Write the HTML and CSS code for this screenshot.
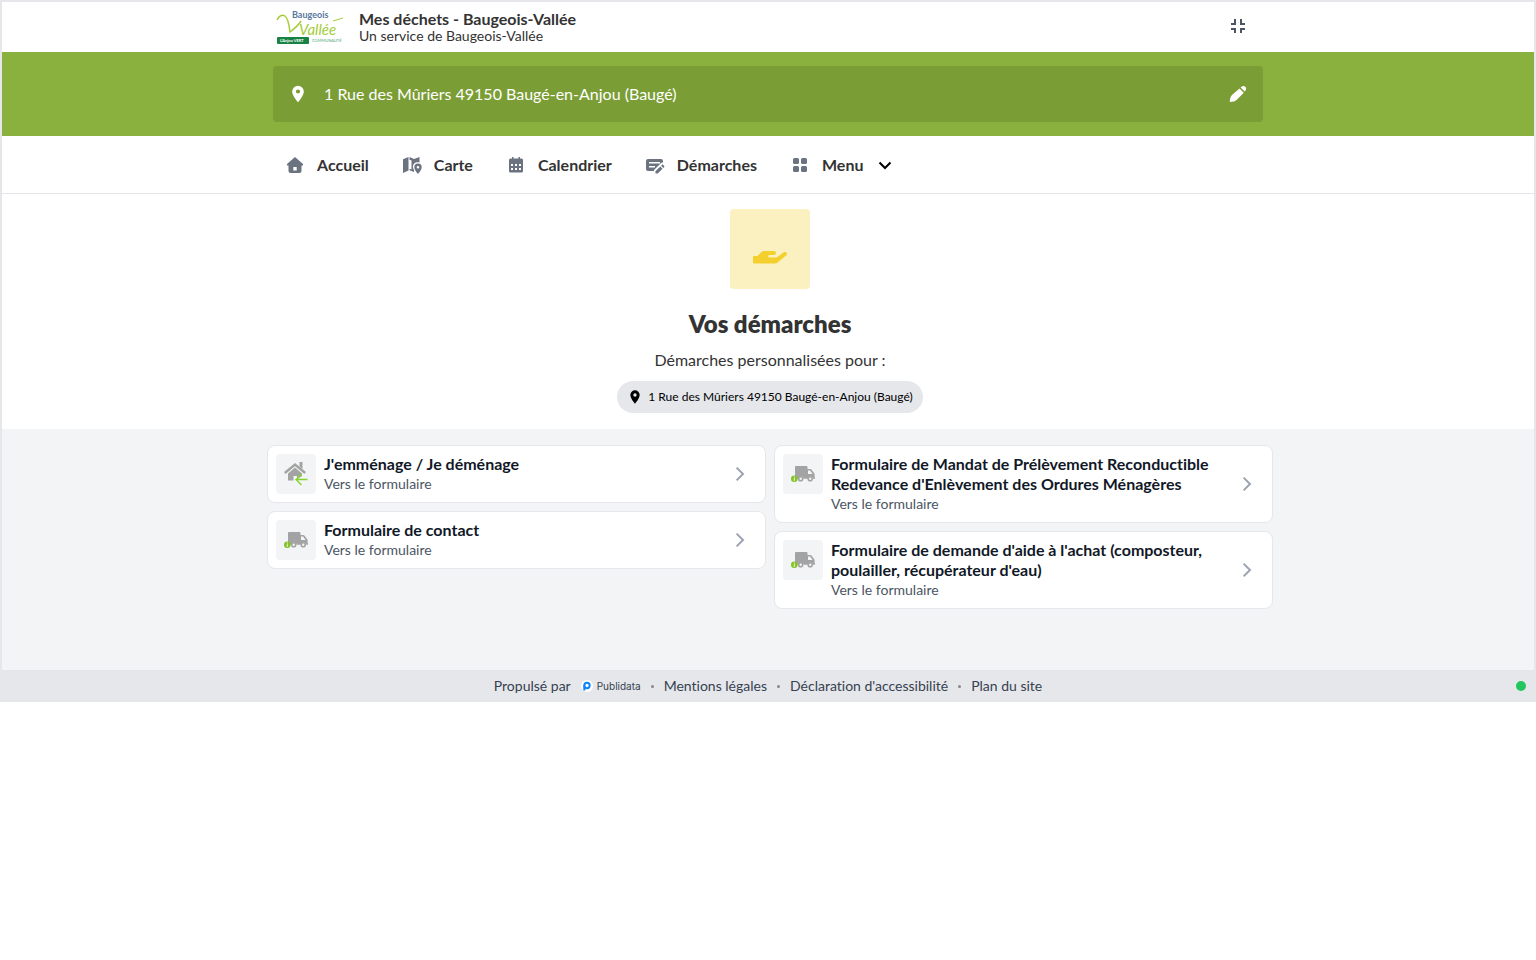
FILE: index.html
```
<!DOCTYPE html>
<html lang="fr">
  <head>
    <meta charset="UTF-8" />
    <meta name="viewport" content="width=device-width, initial-scale=1.0" />
    <title>Mes déchets - Baugeois-Vallée</title>
    <link rel="stylesheet" href="styles.css" />
  </head>
  <body>
    <!-- shared icons -->
    <svg class="sprite" aria-hidden="true">
      <symbol id="pin" viewBox="0 0 24 24">
        <path d="M12 2a7 7 0 0 0-7 7c0 5.2 7 13 7 13s7-7.8 7-13a7 7 0 0 0-7-7zm0 9.5a2.5 2.5 0 1 1 0-5 2.5 2.5 0 0 1 0 5z" />
      </symbol>
      <symbol id="chevron" viewBox="0 0 24 24">
        <path d="M8.6 5.6l6.4 6.4-6.4 6.4" fill="none" stroke="currentColor" stroke-width="2" />
      </symbol>
      <symbol id="truck" viewBox="0 0 24 24">
        <path
          fill="#a3a3a3"
          d="M5 4h10.500c.5 0 1 .5 1 1v2h2.600c.5 0 1 .2 1.300.6l2.700 3.300c.3.400.5.900.5 1.400V15h.4v1.800h-1.700a2.900 2.900 0 0 0-5.700 0h-3.800a2.900 2.900 0 0 0-5.700 0H4V5c0-.5.5-1 1-1zM17 8.500V12h4.600l-2.500-3.500z"
        />
        <circle cx="9.700" cy="16.700" r="2" fill="none" stroke="#a3a3a3" stroke-width="1.600" />
        <circle cx="19.200" cy="16.700" r="2" fill="none" stroke="#a3a3a3" stroke-width="1.600" />
        <circle cx="3.300" cy="16.700" r="3.300" fill="#84c225" />
        <path d="M3.300 14.500v1M3.300 16.300v2.400" stroke="#fff" stroke-width="1" />
      </symbol>
    </svg>

    <div class="widget">
      <header class="header">
        <div class="container header-content">
          <svg class="logo" viewBox="0 0 70 36" role="img" aria-label="Baugeois Vallée">
            <path d="M2 11c2-4 5-6 8-4s4 8 5 16c4-3 8-6 11-11" fill="none" stroke="#a5cd39" stroke-width="1.500" />
            <text x="17" y="9" class="logo-name">Baugeois</text>
            <text x="24" y="26" class="logo-script">Vallée</text>
            <path d="M58 12l10-3" fill="none" stroke="#a5cd39" stroke-width="1" />
            <rect x="2" y="28" width="32" height="7" rx="1" fill="#178243" />
            <text x="5" y="33" class="logo-band">L'Anjou VERT</text>
            <text x="37" y="33" class="logo-sub">COMMUNAUTÉ</text>
          </svg>
          <div class="brand">
            <h1>Mes déchets - Baugeois-Vallée</h1>
            <p>Un service de Baugeois-Vallée</p>
          </div>
          <button class="icon-button shrink" aria-label="Quitter le plein écran">
            <svg viewBox="0 0 24 24"><path d="M5 9h4V4M15 4v5h4M5 14h4v4M15 18v-4h4" fill="none" stroke="currentColor" stroke-width="2" /></svg>
          </button>
        </div>
      </header>

      <section class="address">
        <div class="container address-bar">
          <svg class="address-pin"><use href="#pin" /></svg>
          <span>1 Rue des Mûriers 49150 Baugé-en-Anjou (Baugé)</span>
          <button class="icon-button" aria-label="Modifier l'adresse">
            <svg viewBox="0 0 24 24" fill="currentColor">
              <path d="M13.500 6.500l4.300 4.300-7 7c-1.500 1.500-4 2.200-7 2.200 0-3 .7-5.500 2.200-7zM14.600 5.400c1.500-1.700 3.300-2 4.700-.6s1.100 3.200-.5 4.800z" />
            </svg>
          </button>
        </div>
      </section>

      <nav class="nav">
        <div class="container nav-list">
          <a href="#">
            <svg viewBox="0 0 24 24"><path d="M12 4l8 7v1.500h-1.500V18a2 2 0 0 1-2 2h-9a2 2 0 0 1-2-2v-5.500H4V11zM10.300 14v3.500h3.400V14z" /></svg>
            Accueil
          </a>
          <a href="#">
            <svg viewBox="0 0 24 24">
              <path d="M3 6.300L8.500 4v13.500L3 20zM9.500 4l4.500 2v4.800c-1 1.200-1.300 2.500-1 3.800.2.800.5 1.500 1 2.400v2l-4.500-1.700v-1.500l2 .7V7.500l-2-.8zM14 6l5.500-2v5.500c-2-.4-4-.2-5.500 1.300z" />
              <path d="M18 10.500a3.700 3.700 0 0 0-3.700 3.700c0 2.700 3.700 6.800 3.700 6.800s3.700-4.100 3.700-6.800a3.700 3.700 0 0 0-3.700-3.700zm0 5a1.300 1.300 0 1 1 0-2.600 1.300 1.300 0 0 1 0 2.600z" />
            </svg>
            Carte
          </a>
          <a href="#">
            <svg viewBox="0 0 24 24">
              <path
                fill-rule="evenodd"
                d="M8 4h1.500v1.500h5V4H16v1.500h1.500A1.500 1.500 0 0 1 19 7v11a1.500 1.500 0 0 1-1.500 1.500h-11A1.500 1.500 0 0 1 5 18V7a1.500 1.500 0 0 1 1.500-1.500H8zM7 11v2h2v-2zm4 0v2h2v-2zm4 0v2h2v-2zM7 15v2h2v-2zm4 0v2h2v-2zm4 0v2h2v-2z"
              />
            </svg>
            Calendrier
          </a>
          <a href="#">
            <svg viewBox="0 0 24 24">
              <path fill-rule="evenodd" d="M5 6h13a2 2 0 0 1 2 2v1.500c-1 0-2 .5-2.700 1.200L11 17v1H5a2 2 0 0 1-2-2V8a2 2 0 0 1 2-2zm1 3v1.500h11V9zm0 4v1.500h6V13z" />
              <path d="M12.500 18.300l4.800-4.800 2.200 2.200-4.800 4.800h-2.200zM18.100 12.700l.8-.8c.4-.4.900-.4 1.300 0l.9.9c.4.400.4.900 0 1.300l-.8.800z" />
            </svg>
            Démarches
          </a>
          <button class="menu-button" aria-haspopup="true">
            <svg viewBox="0 0 24 24">
              <rect x="5" y="5" width="6" height="6" rx="1.500" /><rect x="13" y="5" width="6" height="6" rx="1.500" />
              <rect x="5" y="13" width="6" height="6" rx="1.500" /><rect x="13" y="13" width="6" height="6" rx="1.500" />
            </svg>
            Menu
            <svg class="menu-arrow" viewBox="0 0 24 24"><path d="M6.500 9.500l5.500 5.500 5.500-5.500" fill="none" stroke="#000" stroke-width="2" /></svg>
          </button>
        </div>
      </nav>

      <main>
        <section class="hero">
          <div class="hero-icon">
            <svg viewBox="0 0 34 14">
              <path d="M1 5h3.500l3.200-3.300C8.800.6 10 0 11.500 0H21a2 2 0 0 1 0 4h-4.500a1.200 1.200 0 0 0 0 2.600h7.200l6.800-5.100c1.300-.8 2.600-.5 3.200.4.600 1 .3 2-.7 2.700l-8 6.700c-1 .8-1.800 1.200-3 1.200H1a1 1 0 0 1-1-1V6a1 1 0 0 1 1-1z" />
            </svg>
          </div>
          <h2>Vos démarches</h2>
          <p>Démarches personnalisées pour :</p>
          <button class="pill">
            <svg><use href="#pin" /></svg>
            1 Rue des Mûriers 49150 Baugé-en-Anjou (Baugé)
          </button>
        </section>

        <section class="services">
          <div class="columns">
            <div class="column">
              <a href="#" class="card">
                <span class="card-icon">
                  <svg viewBox="0 0 24 24">
                    <path d="M.8 11L11 2.500 21.200 11" fill="none" stroke="#a3a3a3" stroke-width="2.400" />
                    <path fill="#a3a3a3" d="M15.500 0h3v7l-3-2.500zM4 11.500l7-6 7 6v2.500l-5 3.500v-3.500H9.500v4.500H4z" />
                    <path d="M23.500 17.500h-11M17.500 12L12 17.500l5.500 5.500" fill="none" stroke="#84d52b" stroke-width="1.400" />
                  </svg>
                </span>
                <span class="card-text">
                  <strong>J'emménage / Je déménage</strong>
                  <small>Vers le formulaire</small>
                </span>
                <svg class="arrow"><use href="#chevron" /></svg>
              </a>
              <a href="#" class="card">
                <span class="card-icon"><svg><use href="#truck" /></svg></span>
                <span class="card-text">
                  <strong>Formulaire de contact</strong>
                  <small>Vers le formulaire</small>
                </span>
                <svg class="arrow"><use href="#chevron" /></svg>
              </a>
            </div>
            <div class="column">
              <a href="#" class="card">
                <span class="card-icon"><svg><use href="#truck" /></svg></span>
                <span class="card-text">
                  <strong>Formulaire de Mandat de Prélèvement Reconductible Redevance d'Enlèvement des Ordures Ménagères</strong>
                  <small>Vers le formulaire</small>
                </span>
                <svg class="arrow"><use href="#chevron" /></svg>
              </a>
              <a href="#" class="card">
                <span class="card-icon"><svg><use href="#truck" /></svg></span>
                <span class="card-text">
                  <strong>Formulaire de demande d'aide à l'achat (composteur, poulailler, récupérateur d'eau)</strong>
                  <small>Vers le formulaire</small>
                </span>
                <svg class="arrow"><use href="#chevron" /></svg>
              </a>
            </div>
          </div>
        </section>
      </main>
    </div>

    <footer class="footer">
      <div class="footer-links">
        <a href="#" class="powered">
          Propulsé par
          <span class="publidata">
            <svg viewBox="0 0 12 12">
              <circle cx="6" cy="6" r="6" fill="#fff" />
              <path d="M3.300 10.500V5.500" stroke="#0a84ff" stroke-width="2" />
              <circle cx="6" cy="5.500" r="2.700" fill="none" stroke="#0a84ff" stroke-width="2" />
            </svg>
            Publidata
          </span>
        </a>
        <i></i>
        <a href="#">Mentions légales</a>
        <i></i>
        <a href="#">Déclaration d'accessibilité</a>
        <i></i>
        <a href="#">Plan du site</a>
      </div>
      <span class="status"></span>
    </footer>
  </body>
</html>
```
FILE: styles.css
```
* {
  margin: 0;
  padding: 0;
  box-sizing: border-box;
}
body {
  font: 16px/20px Lato, "Open Sans", sans-serif;
  font-variant-ligatures: no-common-ligatures;
  color: #333;
  background-color: #fff;
}
a {
  color: inherit;
  text-decoration: none;
}
button {
  font: inherit;
  color: inherit;
  border: none;
  background: none;
  cursor: pointer;
}
svg {
  display: block;
  flex: none;
  width: 24px;
  height: 24px;
}
.sprite {
  position: absolute;
  width: 0;
  height: 0;
}
.widget {
  border: 2px solid #e5e7eb;
  border-bottom: none;
}
.container {
  max-width: 990px;
  margin: 0 auto;
}

/* header */
.header-content {
  display: flex;
  align-items: center;
  height: 50px;
  padding: 0 13px 0 2px;
}
.logo {
  width: 70px;
  height: 36px;
  margin-right: 14px;
}
.logo-name {
  font: bold 9px Lato, sans-serif;
  fill: #55789c;
}
.logo-script {
  font: italic 15px Lato, sans-serif;
  fill: #a5cd39;
}
.logo-band {
  font: bold 4px Lato, sans-serif;
  fill: #fff;
}
.logo-sub {
  font: 4px Lato, sans-serif;
  fill: #4ea777;
}
.brand h1 {
  font-size: 16px;
  line-height: 18px;
  font-weight: 700;
}
.brand p {
  font-size: 14px;
  line-height: 16px;
}
.icon-button {
  margin-left: auto;
}
.shrink {
  color: #4b5563;
}

/* address */
.address {
  padding: 14px 0;
  background-color: #8ab03e;
}
.address-bar {
  display: flex;
  align-items: center;
  height: 56px;
  padding: 0 13px;
  border-radius: 4px;
  color: #fff;
  background-color: #7b9d36;
}
.address-pin {
  width: 24px;
  height: 20px;
  margin-right: 14px;
  fill: currentColor;
}

/* navigation */
.nav {
  border-bottom: 1px solid #e5e7eb;
  box-shadow: 0 1px 2px rgba(0, 0, 0, 0.05);
}
.nav-list {
  display: flex;
  gap: 31px;
  height: 57px;
  padding: 0 10px;
  font-weight: 700;
}
.nav-list a,
.menu-button {
  display: flex;
  align-items: center;
  gap: 10px;
}
.nav-list svg {
  fill: #6b7280;
}

/* hero */
main {
  background-color: #f3f4f6;
}
.hero {
  display: flex;
  flex-direction: column;
  align-items: center;
  padding: 15px 0 16px 4px;
  background-color: #fff;
}
.hero-icon {
  display: flex;
  justify-content: center;
  width: 80px;
  height: 80px;
  padding-top: 42px;
  border-radius: 4px;
  background-color: #faf0c0;
}
.hero-icon svg {
  width: 34px;
  height: 14px;
  fill: #f3d02d;
}
.hero h2 {
  margin-top: 19px;
  font-size: 24px;
  line-height: 32px;
  font-weight: 800;
}
.hero p {
  margin: 8px 0 9px;
  line-height: 24px;
}
.pill {
  display: flex;
  align-items: center;
  gap: 5px;
  height: 32px;
  padding: 0 10px;
  border-radius: 16px;
  font-size: 12px;
  color: #000;
  background-color: #e5e7eb;
}
.pill svg {
  width: 16px;
  height: 16px;
}

/* services */
.services {
  padding: 16px 0 61px 4px;
}
.columns {
  display: grid;
  grid-template-columns: 1fr 1fr;
  gap: 8px;
  max-width: 1006px;
  margin: 0 auto;
}
.column {
  display: flex;
  flex-direction: column;
  gap: 8px;
}
.card {
  display: flex;
  align-items: center;
  gap: 8px;
  padding: 8px 13px 8px 8px;
  border: 1px solid #e5e7eb;
  border-radius: 8px;
  background-color: #fff;
}
.card-icon {
  display: flex;
  align-self: flex-start;
  align-items: center;
  justify-content: center;
  width: 40px;
  height: 40px;
  border-radius: 4px;
  background-color: #f3f4f6;
}
.card-text {
  flex: 1;
}
.card-text strong {
  display: block;
  color: #111827;
}
.card-text small {
  display: block;
  font-size: 14px;
  color: #4b5563;
}
.arrow {
  color: #9ca3af;
}

/* footer */
.footer {
  display: grid;
  grid-template-columns: 1fr auto 1fr;
  align-items: center;
  height: 32px;
  padding: 0 10px;
  background-color: #e5e7eb;
  font-size: 14px;
  color: #374151;
}
.footer-links {
  grid-column: 2;
  display: flex;
  align-items: center;
  gap: 10px;
}
.footer-links i {
  width: 3px;
  height: 3px;
  border-radius: 50%;
  background-color: #888;
}
.powered,
.publidata {
  display: flex;
  align-items: center;
}
.powered {
  gap: 10px;
}
.publidata {
  gap: 4px;
  font: 10px/20px Inter, sans-serif;
}
.publidata svg {
  width: 12px;
  height: 12px;
}
.status {
  justify-self: end;
  width: 10px;
  height: 10px;
  border-radius: 50%;
  background-color: #22c55e;
}
```
